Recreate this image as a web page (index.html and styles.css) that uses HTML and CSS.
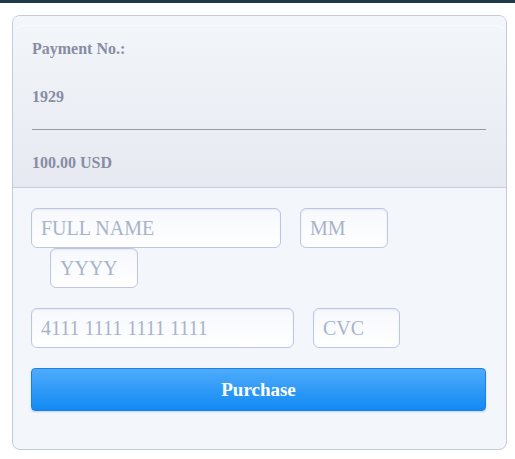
FILE: index.html
```html
<!DOCTYPE html>
<html lang="en">
<head>
    <meta charset="UTF-8">
    <meta name="viewport" content="width=device-width, initial-scale=1.0">
    <title>Payment</title>
    <link rel="stylesheet" href="styles.css">
</head>
<body>
    <div class="top-bar"></div>

    <div class="page">
        <div class="pay-card">
            <div class="pay-head">
                <div class="pay-head-inner">
                    <p class="pay-label">Payment No.:</p>
                    <p class="pay-number">1929</p>
                    <hr class="pay-line">
                    <p class="pay-amount">100.00 USD</p>
                </div>
            </div>

            <form class="pay-form">
                <div class="form-row">
                    <input class="field field-name" type="text" placeholder="FULL NAME">
                    <input class="field field-small" type="text" placeholder="MM">
                    <input class="field field-small field-year" type="text" placeholder="YYYY">
                </div>
                <div class="form-row">
                    <input class="field field-card" type="text" placeholder="4111 1111 1111 1111">
                    <input class="field field-cvc" type="text" placeholder="CVC">
                </div>
                <button class="purchase-btn" type="button">Purchase</button>
            </form>
        </div>
    </div>
</body>
</html>
```

FILE: styles.css
```css
body {
    margin: 0;
    font-family: 'Liberation Serif', 'Times New Roman', serif;
    background-color: #ffffff;
}

.top-bar {
    height: 3px;
    background-color: #1e3a4b;
}

.page {
    padding: 12px 8px 10px 12px;
}

.pay-card {
    border: 1px solid #c3cadb;
    border-radius: 8px;
    background-color: #f3f6fb;
    overflow: hidden;
}

.pay-head {
    padding-top: 9px;
    background: linear-gradient(to bottom, #f3f6fa, #e6e9f0);
    border-bottom: 1px solid #c8cee0;
}

.pay-head-inner {
    border-top: 1px solid #fbfcfe;
    border-radius: 10px 10px 0 0;
    padding: 14px 20px 16px 19px;
}

.pay-head p {
    margin: 0;
    font-size: 16px;
    line-height: 17px;
    font-weight: bold;
    color: #888da4;
}

.pay-number {
    margin-top: 31px !important;
}

.pay-line {
    border: 0;
    border-top: 1px solid #9a9a9a;
    margin: 24px 0 24px 0;
    height: 0;
}

.pay-form {
    padding: 20px 20px 38px 18px;
}

.form-row {
    display: flex;
    flex-wrap: wrap;
    column-gap: 19px;
    margin-bottom: 20px;
}

.field {
    box-sizing: border-box;
    height: 40px;
    border: 1px solid #bcc6e6;
    border-radius: 6px;
    background: linear-gradient(to bottom, #f6f8fc, #ffffff);
    box-shadow: inset 0 1px 2px rgba(0, 0, 0, 0.06);
    padding: 0 9px;
    font-family: 'Liberation Serif', 'Times New Roman', serif;
    font-size: 20px;
    color: #555;
    outline: none;
}

.field::placeholder {
    color: #a9b3cb;
}

.field-name {
    width: 250px;
}

.field-small {
    width: 88px;
}

.field-year {
    margin-left: 19px;
}

.field-card {
    width: 263px;
}

.field-cvc {
    width: 87px;
}

.purchase-btn {
    display: block;
    width: 100%;
    height: 43px;
    border: 1px solid #1a80e6;
    border-radius: 4px;
    background: linear-gradient(to bottom, #4eabfb, #128af3);
    box-shadow: 0 1px 2px rgba(0, 60, 140, 0.2);
    color: #ffffff;
    font-family: 'Liberation Serif', 'Times New Roman', serif;
    font-size: 19px;
    font-weight: bold;
    cursor: pointer;
}
```
